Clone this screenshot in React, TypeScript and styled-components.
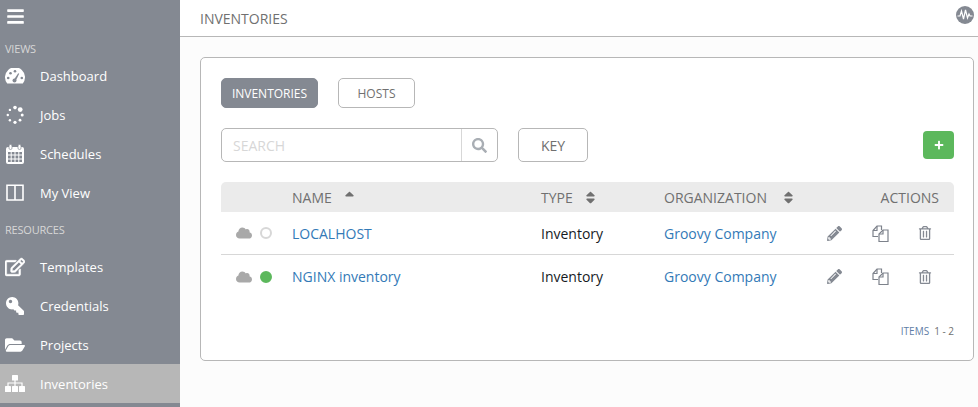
import React from 'react';
import styled, { createGlobalStyle } from 'styled-components';
import {
  FaBars,
  FaRegEdit,
  FaKey,
  FaFolderOpen,
  FaSearch,
  FaCloud,
  FaPencilAlt,
  FaRegTrashAlt,
  FaPlus,
  FaSortUp,
  FaSort,
} from 'react-icons/fa';

const GlobalStyle = createGlobalStyle`
  html, body {
    margin: 0;
    padding: 0;
    height: 100%;
    overflow: hidden;
    background: #fcfcfc;
    font-family: "Open Sans", "Noto Sans", sans-serif;
  }
  #root { height: 100%; }
`;

const Page = styled.div`
  display: flex;
  height: 407px;
`;

const Sidebar = styled.nav`
  width: 180px;
  flex: none;
  background: #848992;
  display: flex;
  flex-direction: column;
`;

const Burger = styled.div`
  height: 32px;
  padding-left: 6px;
  display: flex;
  align-items: center;
  color: #fff;
  font-size: 19px;
`;

const SectionLabel = styled.div<{ $height: number; $top: number }>`
  height: ${({ $height }) => $height}px;
  box-sizing: border-box;
  padding: ${({ $top }) => $top}px 5px 0;
  display: flex;
  align-items: center;
  color: #d7d7d7;
  font-size: 11px;
  letter-spacing: -0.2px;
`;

const NavItem = styled.div<{ $active?: boolean }>`
  height: 39px;
  display: flex;
  align-items: center;
  color: #fff;
  font-size: 13px;
  background: ${({ $active }) => ($active ? '#b7b7b7' : 'transparent')};
`;

const NavIcon = styled.span`
  width: 40px;
  flex: none;
  display: flex;
  justify-content: center;
  padding-right: 10px;
  box-sizing: border-box;
  font-size: 20px;
`;

const KeyIcon = styled(FaKey)`
  transform: scaleX(-1);
  font-size: 18px;
`;

const EditIcon = styled(FaRegEdit)`
  stroke: currentColor;
  stroke-width: 14px;
`;

const Main = styled.main`
  flex: 1;
  min-width: 0;
  display: flex;
  flex-direction: column;
`;

const Header = styled.header`
  height: 36px;
  flex: none;
  background: #fff;
  border-bottom: 1px solid #b7b7b7;
  padding: 0 4px 0 20px;
  display: flex;
  align-items: center;
  justify-content: space-between;
  color: #707070;
  font-size: 14px;
`;

const Pulse = styled.svg`
  width: 18px;
  height: 18px;
  margin-top: -6px;
`;

const Panel = styled.section`
  margin: 20px 4px 0 20px;
  height: 304px;
  box-sizing: border-box;
  background: #fff;
  border: 1px solid #b7b7b7;
  border-radius: 5px;
  padding: 20px 19px 0 20px;
  display: flex;
  flex-direction: column;
`;

const Tabs = styled.div`
  display: flex;
  gap: 20px;
`;

const Tab = styled.div<{ $active?: boolean; $width: number }>`
  width: ${({ $width }) => $width}px;
  height: 30px;
  box-sizing: border-box;
  border-radius: 5px;
  border: 1px solid ${({ $active }) => ($active ? '#848992' : '#b7b7b7')};
  background: ${({ $active }) => ($active ? '#848992' : '#fff')};
  color: ${({ $active }) => ($active ? '#fff' : '#707070')};
  display: flex;
  align-items: center;
  justify-content: center;
  font-size: 12px;
`;

const Toolbar = styled.div`
  margin-top: 20px;
  height: 34px;
  display: flex;
  align-items: center;
`;

const Search = styled.div`
  width: 277px;
  height: 34px;
  box-sizing: border-box;
  border: 1px solid #b7b7b7;
  border-radius: 5px;
  display: flex;
`;

const SearchText = styled.div`
  flex: 1;
  padding-left: 11px;
  display: flex;
  align-items: center;
  color: #d7d7d7;
  font-size: 14px;
`;

const SearchButton = styled.div`
  width: 36px;
  box-sizing: border-box;
  border-left: 1px solid #d7d7d7;
  display: flex;
  align-items: center;
  justify-content: center;
  color: #a9aeb4;
  font-size: 15px;
`;

const KeyButton = styled.div`
  width: 70px;
  height: 34px;
  box-sizing: border-box;
  margin-left: 20px;
  border: 1px solid #b7b7b7;
  border-radius: 5px;
  display: flex;
  align-items: center;
  justify-content: center;
  color: #707070;
  font-size: 14px;
`;

const AddButton = styled.div`
  margin-left: auto;
  width: 31px;
  height: 28px;
  border-radius: 4px;
  background: #5cb85c;
  color: #fff;
  font-size: 10px;
  display: flex;
  align-items: center;
  justify-content: center;
`;

const Table = styled.div`
  margin-top: 20px;
`;

const HeaderRow = styled.div`
  height: 30px;
  display: grid;
  grid-template-columns: 71px 249px 123px 140px 1fr;
  align-items: center;
  background: #ebebeb;
  border-radius: 5px 5px 0 0;
  color: #707070;
  font-size: 14px;
`;

const HeaderCell = styled.div`
  display: flex;
  align-items: center;
  white-space: nowrap;
`;

const SortMark = styled.span<{ $gap: number }>`
  margin-left: ${({ $gap }) => $gap}px;
  display: flex;
  font-size: 15px;
  color: #707070;
`;

const ActionsHead = styled.div`
  justify-self: end;
  padding-right: 15px;
`;

const Row = styled.div<{ $last?: boolean }>`
  height: 43px;
  box-sizing: border-box;
  display: grid;
  grid-template-columns: 71px 249px 123px 140px 1fr;
  align-items: center;
  font-size: 14px;
  color: #161b1f;
  border-bottom: ${({ $last }) => ($last ? 'none' : '1px solid #d7d7d7')};
`;

const Status = styled.div`
  display: flex;
  align-items: center;
  padding-left: 15px;
  color: #a9a9a9;
  font-size: 16px;
  gap: 8px;
`;

const Dot = styled.span<{ $on?: boolean }>`
  width: 12px;
  height: 12px;
  box-sizing: border-box;
  border-radius: 50%;
  background: ${({ $on }) => ($on ? '#5cb85c' : '#fff')};
  border: 2px solid ${({ $on }) => ($on ? '#5cb85c' : '#d7d7d7')};
`;

const RowLink = styled.a`
  color: #337ab7;
  text-decoration: none;
`;

const Actions = styled.div`
  display: grid;
  grid-template-columns: 46px 46px 43px;
  justify-content: end;
  justify-items: center;
  align-items: center;
  padding-right: 8px;
  font-size: 15px;
  color: #848992;
`;

const TrashIcon = styled(FaRegTrashAlt)`
  font-size: 14px;
`;

const Footer = styled.div`
  margin-top: 26px;
  display: flex;
  justify-content: flex-end;
  gap: 5px;
  color: #707070;
  font-size: 10px;
  line-height: 14px;
`;

const FooterLabel = styled.span`
  color: #5f7ea6;
`;

const DashboardGlyph = () => (
  <svg width="20" height="16" viewBox="0 0 20 16" aria-hidden="true">
    <path d="M2.2 15.5A10 10 0 1 1 17.8 15.5Z" fill="#fff" />
    <g fill="#848992">
      <circle cx="3.2" cy="10" r="1.3" />
      <circle cx="5.5" cy="5.2" r="1.3" />
      <circle cx="10" cy="3.2" r="1.3" />
      <circle cx="16.8" cy="10" r="1.3" />
      <circle cx="9.5" cy="12.5" r="2" />
      <path d="M8.7 12 13.2 5.2 14.2 5.8 10.5 13.2Z" />
    </g>
  </svg>
);

const JobsGlyph = () => (
  <svg width="20" height="20" viewBox="0 0 20 20" aria-hidden="true">
    <g fill="#fff">
      <circle cx="10" cy="2.6" r="1.8" />
      <circle cx="15.2" cy="4.6" r="2.4" />
      <circle cx="17.2" cy="10" r="1.5" />
      <circle cx="15" cy="15.2" r="1.4" />
      <circle cx="10" cy="17.3" r="1.6" />
      <circle cx="4.9" cy="15.2" r="1.2" />
      <circle cx="2.8" cy="10" r="1.2" />
      <circle cx="4.9" cy="4.9" r="1.2" />
    </g>
  </svg>
);

const CalendarGlyph = () => (
  <svg width="18" height="20" viewBox="0 0 18 20" aria-hidden="true">
    <path d="M2 3h14a2 2 0 0 1 2 2v13a2 2 0 0 1-2 2H2a2 2 0 0 1-2-2V5a2 2 0 0 1 2-2Z" fill="#fff" />
    <rect x="1.5" y="7.5" width="15" height="11" fill="#848992" />
    <path
      d="M1.5 7.5h15M1.5 11h15M1.5 15h15M1.5 18.5h15M1.5 7.5v11M5.2 7.5v11M9 7.5v11M12.8 7.5v11M16.5 7.5v11"
      stroke="#fff"
      strokeWidth="1"
      fill="none"
    />
    <rect x="3" y="0.5" width="3" height="5" rx="1.4" fill="#fff" stroke="#848992" strokeWidth="0.7" />
    <rect x="12" y="0.5" width="3" height="5" rx="1.4" fill="#fff" stroke="#848992" strokeWidth="0.7" />
  </svg>
);

const ColumnsGlyph = () => (
  <svg width="18" height="17" viewBox="0 0 18 17" aria-hidden="true">
    <path d="M1 1.2h16v14.8H1ZM9 1.2V16" fill="none" stroke="#fff" strokeWidth="1.6" />
  </svg>
);

const SitemapGlyph = () => (
  <svg width="20" height="17" viewBox="0 0 20 17" aria-hidden="true">
    <g fill="#fff">
      <rect x="7" y="0" width="6" height="5.5" rx="0.6" />
      <rect x="0" y="11" width="6" height="6" rx="0.6" />
      <rect x="7" y="11" width="6" height="6" rx="0.6" />
      <rect x="14" y="11" width="6" height="6" rx="0.6" />
    </g>
    <path d="M10 5v6M3 11V8h14v3" fill="none" stroke="#fff" strokeWidth="1.2" />
  </svg>
);

const CopyGlyph = () => (
  <svg width="17" height="17" viewBox="0 0 17 17" aria-hidden="true" fill="none" stroke="#7d828b" strokeWidth="1.2">
    <path d="M6 11.5H1V5.5L5 1h4.5v4" />
    <path d="M5 1v4.5H1" />
    <path d="M16 16.5H7V9l4-4h5Z" fill="#fff" />
    <path d="M11 5v4H7" />
  </svg>
);

const views = [
  { label: 'Dashboard', icon: <DashboardGlyph /> },
  { label: 'Jobs', icon: <JobsGlyph /> },
  { label: 'Schedules', icon: <CalendarGlyph /> },
  { label: 'My View', icon: <ColumnsGlyph /> },
];

const resources = [
  { label: 'Templates', icon: <EditIcon /> },
  { label: 'Credentials', icon: <KeyIcon /> },
  { label: 'Projects', icon: <FaFolderOpen /> },
  { label: 'Inventories', icon: <SitemapGlyph />, active: true },
];

const inventories = [
  { name: 'LOCALHOST', ok: false },
  { name: 'NGINX inventory', ok: true, last: true },
];

const App: React.FC = () => (
  <Page>
    <GlobalStyle />
    <Sidebar>
      <Burger>
        <FaBars />
      </Burger>
      <SectionLabel $height={24} $top={8}>VIEWS</SectionLabel>
      {views.map((v) => (
        <NavItem key={v.label}>
          <NavIcon>{v.icon}</NavIcon>
          {v.label}
        </NavItem>
      ))}
      <SectionLabel $height={35} $top={0}>RESOURCES</SectionLabel>
      {resources.map((r) => (
        <NavItem key={r.label} $active={r.active}>
          <NavIcon>{r.icon}</NavIcon>
          {r.label}
        </NavItem>
      ))}
    </Sidebar>
    <Main>
      <Header>
        INVENTORIES
        <Pulse viewBox="0 0 18 18" aria-hidden="true">
          <circle cx="9" cy="9" r="9" fill="#848992" />
          <path d="M1.5 10h2.5l1.5-5 2 8 2-9 2 8 1.5-4 1 2h2.5" fill="none" stroke="#fff" strokeWidth="1.2" />
        </Pulse>
      </Header>
      <Panel>
        <Tabs>
          <Tab $active $width={97}>INVENTORIES</Tab>
          <Tab $width={77}>HOSTS</Tab>
        </Tabs>
        <Toolbar>
          <Search>
            <SearchText>SEARCH</SearchText>
            <SearchButton>
              <FaSearch />
            </SearchButton>
          </Search>
          <KeyButton>KEY</KeyButton>
          <AddButton>
            <FaPlus />
          </AddButton>
        </Toolbar>
        <Table>
          <HeaderRow>
            <span />
            <HeaderCell>
              NAME
              <SortMark $gap={10}>
                <FaSortUp />
              </SortMark>
            </HeaderCell>
            <HeaderCell>
              TYPE
              <SortMark $gap={10}>
                <FaSort />
              </SortMark>
            </HeaderCell>
            <HeaderCell>
              ORGANIZATION
              <SortMark $gap={14}>
                <FaSort />
              </SortMark>
            </HeaderCell>
            <ActionsHead>ACTIONS</ActionsHead>
          </HeaderRow>
          {inventories.map((item) => (
            <Row key={item.name} $last={item.last}>
              <Status>
                <FaCloud />
                <Dot $on={item.ok} />
              </Status>
              <RowLink href="#">{item.name}</RowLink>
              <span>Inventory</span>
              <RowLink href="#">Groovy Company</RowLink>
              <Actions>
                <FaPencilAlt />
                <CopyGlyph />
                <TrashIcon />
              </Actions>
            </Row>
          ))}
        </Table>
        <Footer>
          <FooterLabel>ITEMS</FooterLabel>
          <span>1 - 2</span>
        </Footer>
      </Panel>
    </Main>
  </Page>
);

export default App;
